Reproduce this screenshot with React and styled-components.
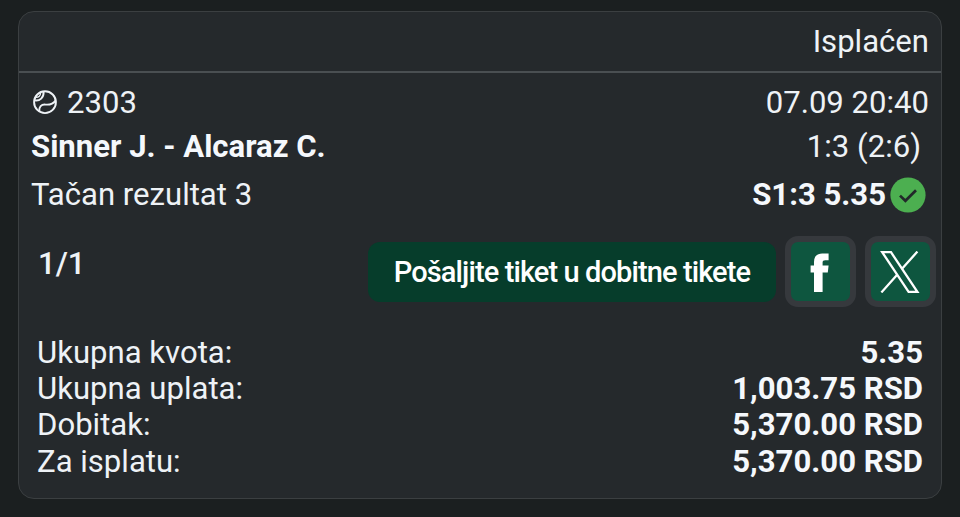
import styled, { createGlobalStyle } from "styled-components";

const totals = [
  { label: "Ukupna kvota:", value: "5.35" },
  { label: "Ukupna uplata:", value: "1,003.75 RSD" },
  { label: "Dobitak:", value: "5,370.00 RSD" },
  { label: "Za isplatu:", value: "5,370.00 RSD" },
];

const TennisIcon = () => (
  <svg width="26" height="26" viewBox="0 0 26 26" fill="none" stroke="#eef2f6" strokeWidth="1.9">
    <circle cx="13" cy="12.2" r="10.9" />
    <path d="M3 10.4C7.6 11.2 12 7.6 11.6 1.8" />
    <path d="M4 7.4C6.4 7.4 8.4 5.8 8.6 3" strokeWidth="1.3" />
    <path d="M7.4 21.4C6.6 16.6 9.4 14.2 13.6 14.6C18 15 21.4 13.6 23.6 10.6" />
  </svg>
);

const CheckIcon = () => (
  <svg width="36" height="36" viewBox="0 0 36 36" fill="none">
    <circle cx="18" cy="18" r="17.6" fill="#4caf50" />
    <path d="M10 18.6L15.4 23.8L26 13.2" stroke="#22282a" strokeWidth="2.7" />
  </svg>
);

const FacebookIcon = () => (
  <svg width="20" height="40" viewBox="0 0 20 40" fill="#fff">
    <path d="M4 40V20.6H0.6V13.4H4V10C4 4.4 7 1.4 12.2 1.4H18.6V8.2H15.2C13.4 8.2 12.6 9 12.6 10.6V13.4H18.6L17.8 20.6H12.6V40Z" />
  </svg>
);

const XIcon = () => (
  <svg width="40" height="42" viewBox="0 0 40 42" fill="none" stroke="#fff" strokeWidth="2.3">
    <path d="M2.2 1.2H11L37.4 40.8H28.6Z" />
    <path d="M37.4 0.6L21.8 18M17.4 23.6L1.4 41.4" />
  </svg>
);

const App = () => {
  return (
    <>
      <GlobalStyle />
      <Page>
        <Card>
          <Header>Isplaćen</Header>

          <Match>
            <Row $height={43}>
              <Code>
                <TennisIcon />
                <span>2303</span>
              </Code>
              <span>07.09 20:40</span>
            </Row>
            <Row $height={45}>
              <Bold>Sinner J. - Alcaraz C.</Bold>
              <Score>1:3 (2:6)</Score>
            </Row>
            <Row $height={51}>
              <span>Tačan rezultat 3</span>
              <Pick>
                <Bold>S1:3 5.35</Bold>
                <CheckIcon />
              </Pick>
            </Row>
          </Match>

          <Actions>
            <Count>1/1</Count>
            <SendButton>Pošaljite tiket u dobitne tikete</SendButton>
            <ShareButton aria-label="Facebook">
              <FacebookIcon />
            </ShareButton>
            <ShareButton aria-label="X">
              <XIcon />
            </ShareButton>
          </Actions>

          <Totals>
            {totals.map(({ label, value }) => (
              <Row key={label} $height={36.4}>
                <span>{label}</span>
                <Bold>{value}</Bold>
              </Row>
            ))}
          </Totals>
        </Card>
      </Page>
    </>
  );
};

export default App;

const GlobalStyle = createGlobalStyle`
  * {
    box-sizing: border-box;
  }

  body {
    margin: 0;
    background: #1b1f20;
  }
`;

const Page = styled.div`
  height: 517px;
  padding: 11px 18px 18px;
  background: #1b1f20;
  color: #eef2f6;
  font-family: Roboto, "Liberation Sans", sans-serif;
  font-size: 31.1px;
  white-space: nowrap;
`;

const Card = styled.div`
  height: 488px;
  border: 1px solid #3b3f41;
  border-radius: 16px;
  background: #25292c;
`;

const Header = styled.div`
  display: flex;
  align-items: center;
  justify-content: flex-end;
  height: 61px;
  padding-right: 12px;
  border-bottom: 2px solid #4a4f52;
`;

const Match = styled.div`
  padding: 8px 12px 0;
`;

const Row = styled.div`
  display: flex;
  align-items: center;
  justify-content: space-between;
  height: ${({ $height }) => $height}px;
`;

const Code = styled.div`
  display: flex;
  align-items: center;
  gap: 9px;
  padding-left: 1px;
`;

const Bold = styled.span`
  color: #f5f8fc;
  font-weight: 700;
`;

const Score = styled.span`
  padding-right: 8px;
`;

const Pick = styled.div`
  display: flex;
  align-items: center;
  gap: 4px;
  padding-right: 3px;
`;

const Actions = styled.div`
  display: flex;
  align-items: center;
  height: 71px;
  margin-top: 16px;
  padding: 0 5px 0 19px;
`;

const Count = styled.span`
  flex: 1;
  padding-bottom: 17px;
  font-weight: 500;
`;

const SendButton = styled.button`
  width: 408px;
  height: 60px;
  padding: 0;
  border: none;
  border-radius: 12px;
  background: #063d2b;
  color: #fff;
  font-family: inherit;
  font-size: 29px;
  font-weight: 500;
  letter-spacing: -0.9px;
`;

const ShareButton = styled.button`
  display: flex;
  align-items: center;
  justify-content: center;
  width: 71px;
  height: 71px;
  margin-left: 9px;
  padding: 0 2px 0 0;
  border: 6px solid #36393d;
  border-radius: 13px;
  background: #0e563f;
`;

const Totals = styled.div`
  padding: 26.8px 18px 0;
`;
